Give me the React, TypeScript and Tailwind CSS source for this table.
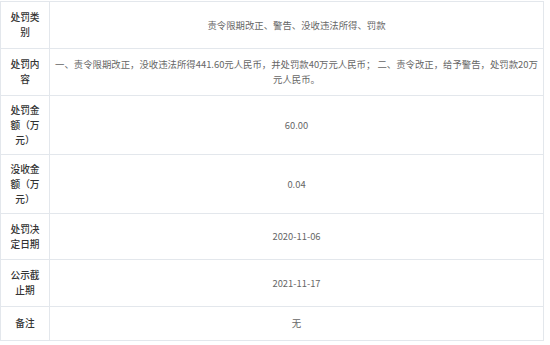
const rows: { label: string; value: React.ReactNode; h: string }[] = [
  { label: "处罚类别", value: "责令限期改正、警告、没收违法所得、罚款", h: "h-[47px]" },
  {
    label: "处罚内容",
    value: (
      <>
        一、责令限期改正，没收违法所得441.60元人民币，并处罚款40万元人民币； 二、责令改正，给予警告，处罚款20万
        <br />
        元人民币。
      </>
    ),
    h: "h-[47px]",
  },
  { label: "处罚金额（万元）", value: "60.00", h: "h-[59px]" },
  { label: "没收金额（万元）", value: "0.04", h: "h-[59px]" },
  { label: "处罚决定日期", value: "2020-11-06", h: "h-[46px]" },
  { label: "公示截止期", value: "2021-11-17", h: "h-[47px]" },
  { label: "备注", value: "无", h: "h-[34px]" },
];

export default function App() {
  return (
    <div className="w-[550px] h-[345px] bg-white pt-px" style={{ fontFamily: '"Noto Sans CJK SC", "Noto Sans", sans-serif' }}>
      <table className="w-[544px] border-collapse table-fixed text-[9.4px] leading-[15px]">
        <colgroup>
          <col className="w-[49px]" />
          <col />
        </colgroup>
        <tbody>
          {rows.map((r) => (
            <tr key={r.label} className={r.h}>
              <td className="border border-[#e3e7ec] px-[6px] text-center text-[#333] font-medium text-[9.7px] align-middle">{r.label}</td>
              <td className="border border-[#e3e7ec] px-[4px] text-center text-[#666] align-middle">{r.value}</td>
            </tr>
          ))}
        </tbody>
      </table>
    </div>
  );
}
